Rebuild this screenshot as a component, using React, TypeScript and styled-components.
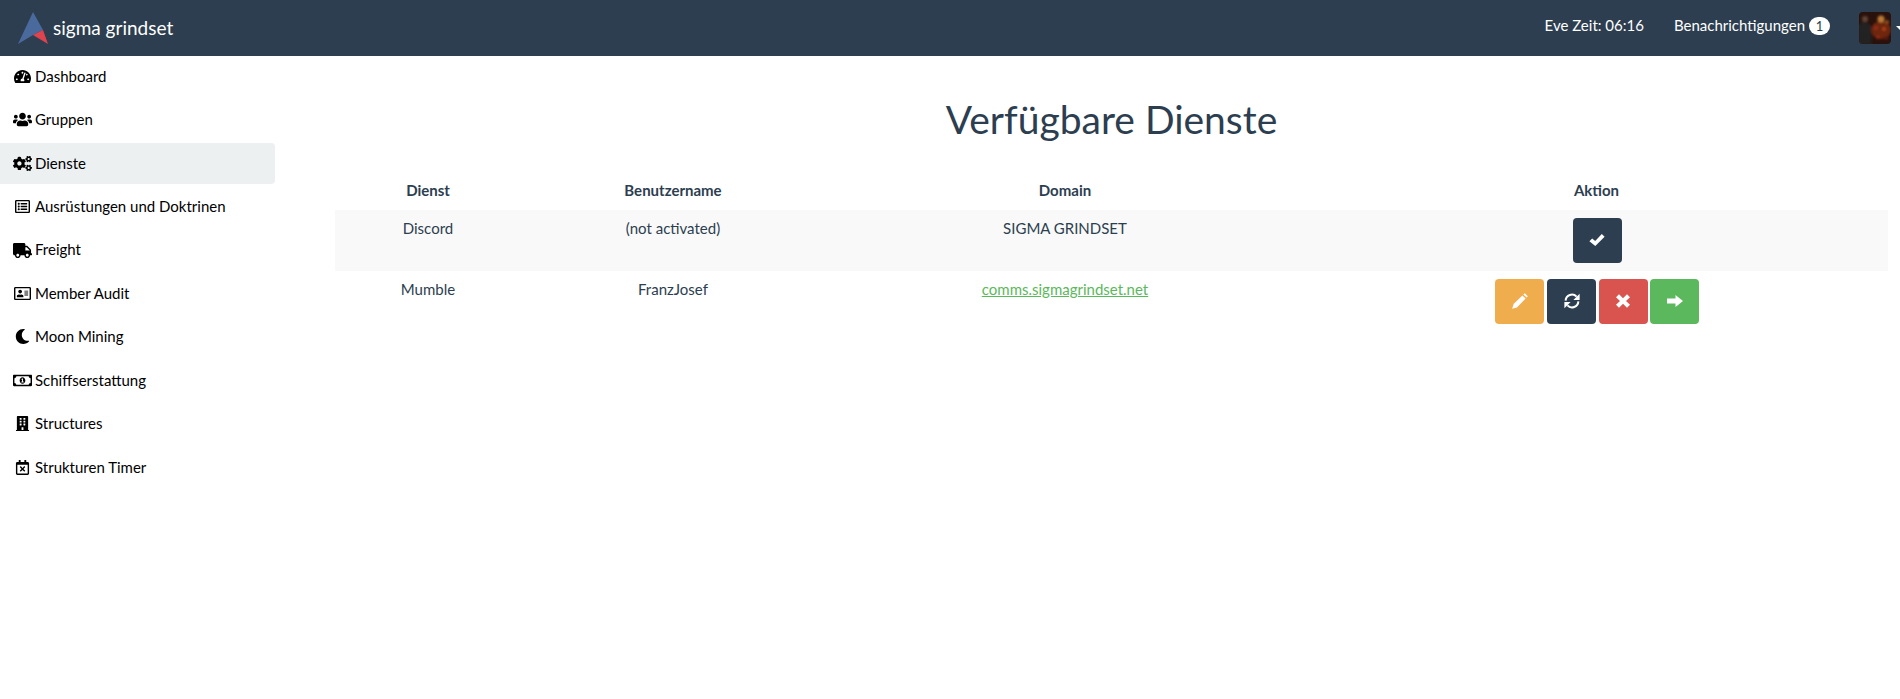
import React from "react";
import styled, { createGlobalStyle } from "styled-components";
import {
  FaTachometerAlt,
  FaUsers,
  FaCogs,
  FaRegListAlt,
  FaTruck,
  FaRegAddressCard,
  FaMoon,
  FaRegMoneyBillAlt,
  FaBuilding,
  FaRegCalendarTimes,
} from "react-icons/fa";

const Global = createGlobalStyle`
  html, body { margin: 0; padding: 0; background: #fff; }
  body {
    font-family: Lato, "Liberation Sans", sans-serif;
    font-size: 15px;
    line-height: 1.42857;
    color: #2c3e50;
    overflow: hidden;
  }
  * { box-sizing: border-box; }
`;

const Page = styled.div`
  width: 1900px;
  height: 699px;
  overflow: hidden;
  display: flex;
  flex-direction: column;
`;

const Navbar = styled.header`
  height: 56px;
  flex: none;
  background: #2c3e50;
  color: #fff;
  display: flex;
  align-items: center;
  padding-left: 18px;
`;

const Brand = styled.a`
  display: flex;
  align-items: center;
  gap: 5px;
  font-size: 19px;
  color: #fff;
  margin-right: auto;
`;

const NavText = styled.span`
  margin: 0 30px 4px 0;
`;

const NotificationLink = styled.span`
  display: flex;
  align-items: center;
  gap: 4px;
  margin: 0 29px 4px 0;
`;

const Badge = styled.span`
  width: 21px;
  height: 18px;
  border-radius: 10px;
  background: #fff;
  color: #2c3e50;
  font-size: 13px;
  line-height: 18px;
  text-align: center;
`;

const Avatar = styled.svg`
  width: 32px;
  height: 32px;
  border-radius: 4px;
  flex: none;
`;

const Caret = styled.span`
  width: 0;
  height: 0;
  margin: 0 -4px 0 5px;
  border-top: 4px solid #fff;
  border-left: 4px solid transparent;
  border-right: 4px solid transparent;
  flex: none;
`;

const Body = styled.div`
  flex: 1;
  display: flex;
  min-height: 0;
`;

const Sidebar = styled.nav`
  width: 275px;
  flex: none;
  display: flex;
  flex-direction: column;
  gap: 2px;
  margin: -0.3px 60px 0 0;
`;

const SideLink = styled.a<{ $active?: boolean }>`
  display: flex;
  align-items: center;
  padding: 10px 0 10px 13px;
  color: #000;
  background: ${(p) => (p.$active ? "#ecf0f1" : "transparent")};
  border-radius: ${(p) => (p.$active ? "0 4px 4px 0" : "0")};
`;

const SideIcon = styled.span<{ $size: number }>`
  width: 19px;
  margin-right: 3px;
  display: flex;
  justify-content: center;
  align-items: center;
  svg {
    width: ${(p) => p.$size}px;
    height: ${(p) => p.$size}px;
    flex: none;
  }
`;

const Main = styled.main`
  width: 1553px;
  flex: none;
`;

const Title = styled.h1`
  margin: 42px 0 30px;
  font-size: 39px;
  font-weight: 400;
  line-height: 1.1;
  text-align: center;
  color: #2c3e50;
`;

const Table = styled.table`
  width: 100%;
  table-layout: fixed;
  border-collapse: collapse;
  text-align: center;
`;

const Th = styled.th`
  padding: 8px;
  height: 39px;
  font-weight: 700;
`;

const Row = styled.tr<{ $striped?: boolean }>`
  background: ${(p) => (p.$striped ? "#f9f9f9" : "transparent")};
`;

const Td = styled.td`
  padding: 8px;
  vertical-align: top;
  height: 61px;
`;

const DomainLink = styled.a`
  color: #5cb85c;
  text-decoration: underline;
`;

const ActionButtons = styled.div`
  display: flex;
  justify-content: center;
  gap: 2.6px;
  padding-left: 1.6px;
`;

const ActionButton = styled.button<{ $bg: string }>`
  width: 49px;
  height: 45px;
  border: 0;
  border-radius: 4px;
  padding: 0;
  display: flex;
  align-items: center;
  justify-content: center;
  color: #fff;
  background: ${(p) => p.$bg};
`;

const Glyph = styled.svg`
  width: 16px;
  height: 16px;
  fill: currentColor;
`;

const GlyphArc = styled.path`
  fill: none;
  stroke: currentColor;
  stroke-width: 2;
`;

const CheckGlyph = () => (
  <Glyph viewBox="0 0 16 16">
    <polygon points="0.4,9.2 3.2,6.4 6.2,9 12.8,2 15.6,4.8 6.3,14" />
  </Glyph>
);

const PencilGlyph = () => (
  <Glyph viewBox="0 0 16 16">
    <polygon points="0.2,15.8 1.6,11 10.4,2.4 13.6,5.6 5,14.4" />
    <polygon points="11.4,1.4 12.8,0.2 15.8,3.2 14.6,4.6" />
  </Glyph>
);

const RefreshGlyph = () => (
  <Glyph viewBox="0 0 16 16">
    <GlyphArc d="M1.6 7.6A6.4 6.4 0 0 1 12.6 3.6" />
    <polygon points="15.6,0.8 15.6,7 9.4,7" />
    <GlyphArc d="M14.4 8.4A6.4 6.4 0 0 1 3.4 12.4" />
    <polygon points="0.4,15.2 0.4,9 6.6,9" />
  </Glyph>
);

const RemoveGlyph = () => (
  <Glyph viewBox="0 0 16 16">
    <polygon points="4,1.2 8,5.2 12,1.2 15,4.2 11,8 15,11.8 12,14.8 8,10.8 4,14.8 1,11.8 5,8 1,4.2" />
  </Glyph>
);

const ArrowGlyph = () => (
  <Glyph viewBox="0 0 16 16">
    <polygon points="0,5.5 8.5,5.5 8.5,2 16,8 8.5,14 8.5,10.5 0,10.5" />
  </Glyph>
);

const LogoMark = () => (
  <svg width="30" height="32" viewBox="0 0 30 32">
    <polygon points="15,0 0,32 15,23 25,18" fill="#4a6a9e" />
    <polygon points="15,23 25,18 30,32" fill="#e0434d" />
  </svg>
);

const nav = [
  { icon: <FaTachometerAlt />, size: 17, label: "Dashboard" },
  { icon: <FaUsers />, size: 19, label: "Gruppen" },
  { icon: <FaCogs />, size: 19, label: "Dienste", active: true },
  { icon: <FaRegListAlt />, size: 15, label: "Ausrüstungen und Doktrinen" },
  { icon: <FaTruck />, size: 19, label: "Freight" },
  { icon: <FaRegAddressCard />, size: 17, label: "Member Audit" },
  { icon: <FaMoon />, size: 15, label: "Moon Mining" },
  { icon: <FaRegMoneyBillAlt />, size: 19, label: "Schiffserstattung" },
  { icon: <FaBuilding />, size: 15, label: "Structures" },
  { icon: <FaRegCalendarTimes />, size: 15, label: "Strukturen Timer" },
];

export default function App() {
  return (
    <Page>
      <Global />
      <Navbar>
        <Brand>
          <LogoMark />
          sigma grindset
        </Brand>
        <NavText>Eve Zeit: 06:16</NavText>
        <NotificationLink>
          Benachrichtigungen
          <Badge>1</Badge>
        </NotificationLink>
        <Avatar viewBox="0 0 32 32">
          <defs>
            <filter id="soft" x="-20%" y="-20%" width="140%" height="140%">
              <feGaussianBlur stdDeviation="1.2" />
            </filter>
          </defs>
          <rect width="32" height="32" fill="#2a120c" />
          <g filter="url(#soft)">
            <ellipse cx="22" cy="18" rx="10" ry="9" fill="#6e2510" />
            <circle cx="22" cy="7" r="3.5" fill="#b97a34" />
            <circle cx="28" cy="10" r="2" fill="#8f4e1e" />
            <circle cx="17" cy="16" r="2" fill="#94321a" />
            <circle cx="25" cy="17" r="2" fill="#a8401c" />
            <circle cx="19" cy="25" r="2" fill="#8e2a16" />
            <circle cx="27" cy="26" r="2" fill="#5a1c10" />
            <path d="M0 32V12l6-3 6 5 1 18z" fill="#232222" />
            <circle cx="6" cy="7" r="3" fill="#5e4234" />
          </g>
        </Avatar>
        <Caret />
      </Navbar>
      <Body>
        <Sidebar>
          {nav.map((n) => (
            <SideLink key={n.label} $active={n.active}>
              <SideIcon $size={n.size}>{n.icon}</SideIcon>
              {n.label}
            </SideLink>
          ))}
        </Sidebar>
        <Main>
          <Title>Verfügbare Dienste</Title>
          <Table>
            <colgroup>
              <col width="186" />
              <col width="304" />
              <col width="480" />
              <col width="583" />
            </colgroup>
            <thead>
              <tr>
                <Th>Dienst</Th>
                <Th>Benutzername</Th>
                <Th>Domain</Th>
                <Th>Aktion</Th>
              </tr>
            </thead>
            <tbody>
              <Row $striped>
                <Td>Discord</Td>
                <Td>(not activated)</Td>
                <Td>SIGMA GRINDSET</Td>
                <Td>
                  <ActionButtons>
                    <ActionButton $bg="#2c3e50"><CheckGlyph /></ActionButton>
                  </ActionButtons>
                </Td>
              </Row>
              <Row>
                <Td>Mumble</Td>
                <Td>FranzJosef</Td>
                <Td><DomainLink>comms.sigmagrindset.net</DomainLink></Td>
                <Td>
                  <ActionButtons>
                    <ActionButton $bg="#f0ad4e"><PencilGlyph /></ActionButton>
                    <ActionButton $bg="#2c3e50"><RefreshGlyph /></ActionButton>
                    <ActionButton $bg="#d9534f"><RemoveGlyph /></ActionButton>
                    <ActionButton $bg="#5cb85c"><ArrowGlyph /></ActionButton>
                  </ActionButtons>
                </Td>
              </Row>
            </tbody>
          </Table>
        </Main>
      </Body>
    </Page>
  );
}
